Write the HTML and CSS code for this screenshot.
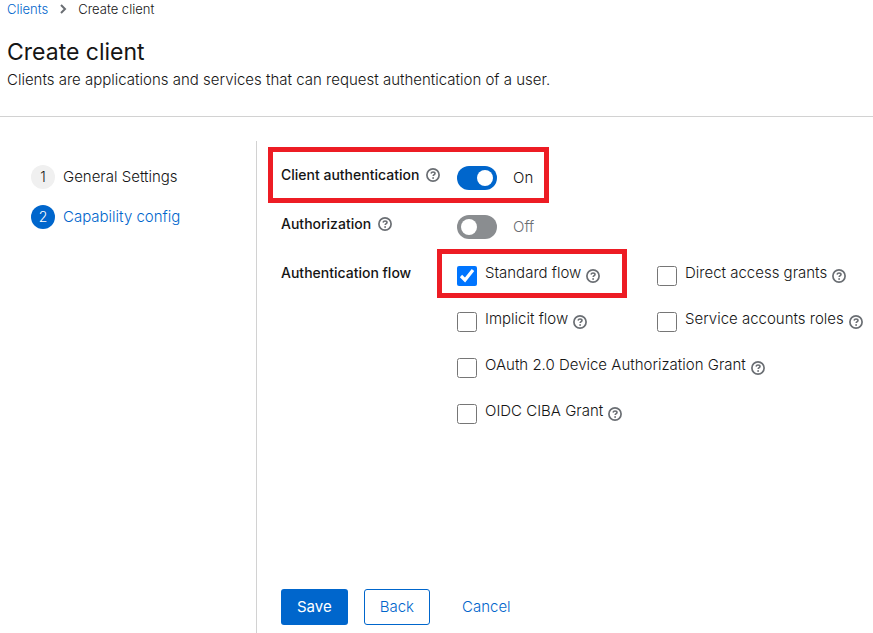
FILE: index.html
```html
<!DOCTYPE html>
<html lang="en">
<head>
  <meta charset="utf-8">
  <title>Create client</title>
  <link rel="stylesheet" href="styles.css">
</head>
<body>
  <svg class="sprite" aria-hidden="true">
    <symbol id="help" viewBox="0 0 14 14">
      <circle cx="7" cy="7" r="6.1" fill="none" stroke="currentColor" stroke-width="1.7"/>
      <path d="M5 5.5C5.3 4.4 6 4 7 4c1.200 0 2 .6 2 1.500C9 6.700 7.200 6.700 7.200 8.100" fill="none" stroke="currentColor" stroke-width="1.600"/>
      <circle cx="7.100" cy="10" r="0.900" fill="currentColor"/>
    </symbol>
  </svg>

  <header class="page-header">
    <nav class="breadcrumb" aria-label="Breadcrumb">
      <a href="#">Clients</a>
      <svg class="chevron" viewBox="0 0 8 10"><path d="M2 1l4 4-4 4" fill="none" stroke="currentColor" stroke-width="2"/></svg>
      <span>Create client</span>
    </nav>
    <h1>Create client</h1>
    <p>Clients are applications and services that can request authentication of a user.</p>
  </header>

  <div class="wizard">
    <nav class="steps" aria-label="Steps">
      <a class="step" href="#"><span class="step-number">1</span>General Settings</a>
      <a class="step current" href="#"><span class="step-number">2</span>Capability config</a>
    </nav>

    <form class="main">
      <div class="field highlight-field">
        <div class="field-label">
          <label for="client-auth">Client authentication</label>
          <svg class="help"><use href="#help"/></svg>
        </div>
        <div class="field-control">
          <input class="switch" type="checkbox" id="client-auth" checked>
          <span class="switch-text">On</span>
        </div>
      </div>

      <div class="field">
        <div class="field-label">
          <label for="authorization">Authorization</label>
          <svg class="help"><use href="#help"/></svg>
        </div>
        <div class="field-control">
          <input class="switch" type="checkbox" id="authorization">
          <span class="switch-text off">Off</span>
        </div>
      </div>

      <div class="field">
        <div class="field-label">Authentication flow</div>
        <div class="flows">
          <div class="check highlight-check">
            <input type="checkbox" id="standard" checked>
            <label for="standard">Standard flow</label>
            <svg class="help"><use href="#help"/></svg>
          </div>
          <div class="check">
            <input type="checkbox" id="direct">
            <label for="direct">Direct access grants</label>
            <svg class="help"><use href="#help"/></svg>
          </div>
          <div class="check">
            <input type="checkbox" id="implicit">
            <label for="implicit">Implicit flow</label>
            <svg class="help"><use href="#help"/></svg>
          </div>
          <div class="check">
            <input type="checkbox" id="service">
            <label for="service">Service accounts roles</label>
            <svg class="help"><use href="#help"/></svg>
          </div>
          <div class="check wide">
            <input type="checkbox" id="device">
            <label for="device">OAuth 2.0 Device Authorization Grant</label>
            <svg class="help"><use href="#help"/></svg>
          </div>
          <div class="check wide">
            <input type="checkbox" id="ciba">
            <label for="ciba">OIDC CIBA Grant</label>
            <svg class="help"><use href="#help"/></svg>
          </div>
        </div>
      </div>

      <div class="actions">
        <button type="submit" class="btn btn-primary">Save</button>
        <button type="button" class="btn btn-secondary">Back</button>
        <button type="button" class="btn btn-link">Cancel</button>
      </div>
    </form>
  </div>
</body>
</html>
```
FILE: styles.css
```css
*,
*::before,
*::after {
  box-sizing: border-box;
}
body {
  display: flex;
  flex-direction: column;
  min-height: 100vh;
  margin: 0;
  font-family: Inter, "Liberation Sans", sans-serif;
  font-size: 15px;
  font-weight: 300;
  line-height: 24px;
  color: #151515;
  background: #fff;
}
a {
  color: #06c;
  text-decoration: none;
}
.sprite {
  position: absolute;
  width: 0;
  height: 0;
}
.page-header {
  padding: 0 7px 24px;
  border-bottom: 1px solid #d2d2d2;
}
.breadcrumb {
  display: flex;
  align-items: center;
  gap: 11px;
  height: 18px;
  font-size: 13px;
}
.chevron {
  width: 8px;
  height: 10px;
  color: #6a6e73;
}
h1 {
  margin: 19px 0 0;
  font-size: 23px;
  font-weight: 400;
  line-height: 31px;
}
.page-header p {
  margin: 0;
}
.wizard {
  display: flex;
  flex: 1;
  padding-top: 24px;
}
.steps {
  display: flex;
  flex-direction: column;
  gap: 16px;
  width: 256px;
  padding: 24px 31px;
}
.step {
  display: flex;
  align-items: center;
  gap: 8px;
  color: #151515;
}
.step-number {
  width: 24px;
  height: 24px;
  border-radius: 50%;
  background: #f0f0f0;
  font-size: 14px;
  text-align: center;
}
.current {
  color: #06c;
}
.current .step-number {
  background: #06c;
  color: #fff;
}
.main {
  display: flex;
  flex: 1;
  flex-direction: column;
  gap: 25px;
  padding: 22px 0 8px 24px;
  border-left: 1px solid #d2d2d2;
}
.field {
  display: grid;
  grid-template-columns: 176px 1fr;
}
.field-label {
  display: flex;
  align-items: center;
  gap: 7px;
  height: 24px;
  font-size: 14px;
  font-weight: 500;
}
.help {
  width: 14px;
  height: 14px;
  color: #6a6e73;
}
.field-control {
  display: flex;
  gap: 16px;
  height: 24px;
  padding-top: 3px;
}
.switch {
  appearance: none;
  width: 40px;
  height: 24px;
  margin: 0;
  padding: 4px;
  border-radius: 12px;
  background: #8a8d90;
}
.switch::before {
  content: "";
  display: block;
  width: 16px;
  height: 16px;
  border-radius: 50%;
  background: #fff;
}
.switch:checked {
  background: #06c;
}
.switch:checked::before {
  margin-left: auto;
}
.off {
  color: #6a6e73;
}
.flows {
  display: grid;
  grid-template-columns: 200px 1fr;
  row-gap: 22px;
}
.check {
  display: flex;
  height: 24px;
  white-space: nowrap;
}
.check input {
  width: 20px;
  height: 20px;
  margin: 5px 8px 0 0;
}
.check .help {
  margin: 8px 0 0 5px;
}
.wide {
  grid-column: 1 / -1;
}
.highlight-field,
.highlight-check {
  position: relative;
}
/* red call-out frames drawn over the form */
.highlight-field::after,
.highlight-check::after {
  content: "";
  position: absolute;
  border: 5px solid #ed1c24;
  pointer-events: none;
}
.highlight-field::after {
  top: -16px;
  left: -13px;
  width: 281px;
  height: 56px;
}
.highlight-check::after {
  top: -12px;
  left: -20px;
  width: 190px;
  height: 49px;
}
.actions {
  display: flex;
  gap: 16px;
  margin-top: auto;
}
.btn {
  height: 36px;
  padding: 0 15px;
  border: 1px solid transparent;
  border-radius: 3px;
  background: none;
  font: inherit;
  color: #06c;
}
.btn-primary {
  background: #06c;
  font-weight: 400;
  color: #fff;
}
.btn-secondary {
  border-color: #06c;
}
```
